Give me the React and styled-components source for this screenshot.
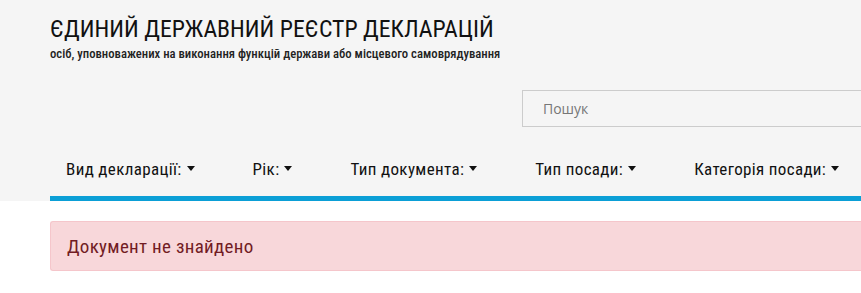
import React from "react";
import styled, { createGlobalStyle } from "styled-components";

const Global = createGlobalStyle`
  html, body { margin: 0; padding: 0; background: #fff; }
  body { font-family: Roboto, "Noto Sans", sans-serif; }
`;

const Header = styled.header`
  background: #f5f5f5;
  padding: 0 0 0 50px;
  height: 201px;
  box-sizing: border-box;
  display: flex;
  flex-direction: column;
`;

const Title = styled.h1`
  margin: 14px 0 0;
  font-family: Roboto, sans-serif;
  font-stretch: 75%;
  font-weight: 400;
  font-size: 23.8px;
  line-height: 30px;
  color: #111;
`;

const Subtitle = styled.div`
  font-family: Roboto, sans-serif;
  font-stretch: 75%;
  font-weight: 500;
  font-size: 12.7px;
  line-height: 16px;
  color: #222;
  margin-top: 2px;
`;

const SearchRow = styled.div`
  display: flex;
  justify-content: flex-end;
  margin-top: 28px;
`;

const Search = styled.input`
  width: 339px;
  height: 37px;
  box-sizing: border-box;
  border: 1px solid #ccc;
  border-right: none;
  background: #f5f5f5;
  padding: 0 20px;
  font-family: "Open Sans", sans-serif;
  font-size: 14px;
  color: #555;
  outline: none;
  &::placeholder { color: #777; }
`;

const Nav = styled.nav`
  margin-top: auto;
  display: flex;
  gap: 58px;
  padding: 14px 0 0 16px;
  height: 74px;
  align-items: center;
  border-bottom: 5px solid #0b9fd6;
  box-sizing: border-box;
`;

const NavItem = styled.span`
  font-family: Roboto, sans-serif;
  font-stretch: 75%;
  font-size: 17px;
  letter-spacing: 0.35px;
  color: #111;
  white-space: nowrap;
  display: inline-flex;
  align-items: center;
`;

const Caret = styled.span`
  display: inline-block;
  width: 0;
  height: 0;
  margin-left: 5px;
  border-top: 5px solid #111;
  border-left: 4.5px solid transparent;
  border-right: 4.5px solid transparent;
`;

const Main = styled.main`
  padding: 20px 0 0 50px;
`;

const Alert = styled.div`
  background: #f8d7da;
  border: 1px solid #f5c6cb;
  border-right: none;
  border-radius: 3px 0 0 3px;
  color: #721c24;
  padding: 0 16px;
  height: 50px;
  box-sizing: border-box;
  display: flex;
  align-items: center;
  font-family: Roboto, sans-serif;
  font-stretch: 75%;
  font-size: 19px;
  letter-spacing: 0.3px;
`;

const items = ["Вид декларації:", "Рік:", "Тип документа:", "Тип посади:", "Категорія посади:"];

export default function App() {
  return (
    <>
      <Global />
      <Header>
        <Title>ЄДИНИЙ ДЕРЖАВНИЙ РЕЄСТР ДЕКЛАРАЦІЙ</Title>
        <Subtitle>осіб, уповноважених на виконання функцій держави або місцевого самоврядування</Subtitle>
        <SearchRow>
          <Search placeholder="Пошук" />
        </SearchRow>
        <Nav>
          {items.map((t) => (
            <NavItem key={t}>
              {t}
              <Caret />
            </NavItem>
          ))}
        </Nav>
      </Header>
      <Main>
        <Alert>Документ не знайдено</Alert>
      </Main>
    </>
  );
}
